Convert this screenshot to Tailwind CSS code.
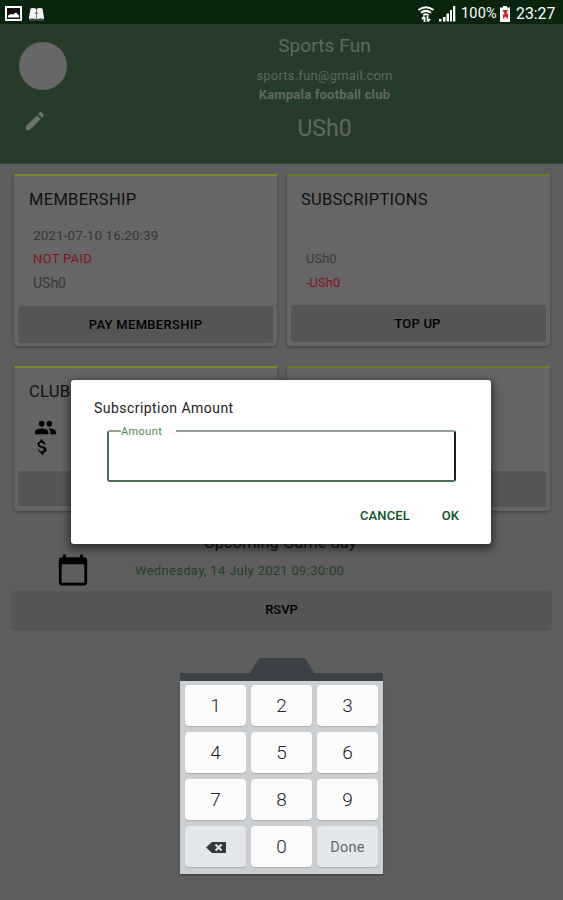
<!DOCTYPE html>
<html lang="en">
<head>
  <meta charset="UTF-8">
  <meta name="viewport" content="width=device-width, initial-scale=1.0">
  <title>Sports Fun</title>
  <script src="https://cdn.jsdelivr.net/npm/@tailwindcss/browser@4"></script>
</head>
<body class="bg-[#5e5e5e] font-[Roboto,sans-serif] text-black">
  <div class="relative w-[563px] h-[900px] overflow-hidden">

    <!-- Status bar -->
    <div class="h-6 bg-[#08240d] flex items-center text-white pl-[5px] pr-[7px] pt-[3px]">
      <svg class="w-[17px] h-[15px]" viewBox="0 0 17 15"><rect x="1" y="1" width="15" height="13" fill="#111" stroke="#fff" stroke-width="2"/><path d="M3 11.5V9.500l3-1.500 2 .5L11 6.500l3 3v2z" fill="#fff"/></svg>
      <svg class="w-[17px] h-[14px] ml-[6px]" viewBox="0 0 17 14"><path d="M2.500 1.500Q6 .5 8.500 2 11 .5 14.500 1.500L16.200 12Q11.500 10.800 8.500 12.500 5.500 10.800.8 12z" fill="#f4f4f4"/><path d="M8.500 2v10M6.500 6h4M1 13h6.500M9.500 13H16" stroke="#777" stroke-width="1"/></svg>
      <svg class="w-[18px] h-[18px] ml-auto" viewBox="0 0 18 18" fill="none" stroke="#fff" stroke-width="2"><path d="M1.500 5Q9-.5 16.500 5M4 7.800Q9 4 14 7.800M6.300 10.300Q9 8.200 11.700 10.300"/><path d="M7.500 17v-5M5 14l2.500-2.500M10.500 11v5.500M10.500 16.500L13 14" stroke-width="1.800"/></svg>
      <svg class="w-[17px] h-[16px] ml-[4px]" viewBox="0 0 17 16" fill="#fff"><path d="M0 13h2.500v2.500H0zM4 11h2.500v4.500H4zM7.500 7.500H10v8H7.500zM11 4h2v11.500h-2zM14 0h2.300v15.500H14z"/></svg>
      <span class="text-[14.5px] leading-5 ml-[5px] w-[37px] whitespace-nowrap tracking-[0.200px]">100%</span>
      <svg class="w-[10px] h-[16px] ml-[2px]" viewBox="0 0 10 16"><path d="M3 0h4v1.500h3V16H0V1.500h3z" fill="#fff"/><path d="M2.500 4h5.500L6.500 7 8 8v5L5.500 10.500 3 13V9l1.500-1.500z" fill="#d3202a"/></svg>
      <span class="text-[15.800px] leading-5 ml-[6px] w-[40px] whitespace-nowrap">23:27</span>
    </div>

    <!-- Profile header -->
    <header class="h-[140px] bg-[#273c28] border-b border-[#3c483c] flex text-[#5f695f]">
      <div class="w-[86px] pl-[19px] pt-[18px]">
        <div class="size-[48px] rounded-full bg-[#676767]"></div>
        <svg class="size-[24px] ml-[4px] mt-[19px]" viewBox="0 0 24 24" fill="#6c726c"><path d="M3 17.250V21h3.750L17.810 9.940l-3.750-3.750L3 17.250zM20.710 7.040a1 1 0 0 0 0-1.410l-2.340-2.340a1 1 0 0 0-1.410 0l-1.830 1.830 3.750 3.750 1.830-1.830z"/></svg>
      </div>
      <div class="flex-1 flex flex-col items-center text-center">
        <div class="text-[19px] leading-6 mt-[10px] tracking-[0.100px]">Sports Fun</div>
        <div class="text-[13px] leading-5 mt-[8px] tracking-[0.200px]">sports.fun@gmail.com</div>
        <div class="text-[13px] leading-5 -mt-px font-bold tracking-[0.200px]">Kampala football club</div>
        <div class="text-[23px] leading-7 mt-[10px]">USh0</div>
      </div>
    </header>

    <!-- Membership and subscriptions -->
    <div class="grid grid-cols-[263px_263px] gap-x-[10px] gap-y-[20px] px-[14px] mt-[10px]">
      <section class="h-[172px] bg-[#666] border-t-2 border-[#7b9011] rounded-b-sm shadow-[0_1px_3px_rgba(0,0,0,0.35)] flex flex-col">
        <h2 class="text-[16.500px] leading-6 pl-[15px] mt-[12px] tracking-[0.300px] text-[#111]">MEMBERSHIP</h2>
        <div class="pl-[19px] mt-[11px] text-[13.500px] leading-6 text-[#373737]">
          <p class="tracking-[0.100px]">2021-07-10 16:20:39</p>
          <p class="text-[#82141c] text-[13px] tracking-[0.300px]">NOT PAID</p>
          <p class="text-[14px]">USh0</p>
        </div>
        <button class="h-[37px] mx-[4px] mt-auto mb-[3px] rounded-[3px] bg-[#565656] text-[13px] font-medium tracking-[0.300px] pt-px">PAY MEMBERSHIP</button>
      </section>
      <section class="h-[172px] bg-[#666] border-t-2 border-[#5f8710] rounded-b-sm shadow-[0_1px_3px_rgba(0,0,0,0.35)] flex flex-col">
        <h2 class="text-[16.500px] leading-6 pl-[14px] mt-[12px] tracking-[0.250px] text-[#111]">SUBSCRIPTIONS</h2>
        <div class="pl-[19px] mt-[35px] text-[13px] leading-6 text-[#373737]">
          <p>USh0</p>
          <p class="text-[#82141c]">-USh0</p>
        </div>
        <button class="h-[37px] mx-[4px] mt-auto mb-[4px] rounded-[3px] bg-[#565656] text-[13px] font-medium tracking-[0.200px] pr-[2px]">TOP UP</button>
      </section>

      <section class="h-[145px] bg-[#646464] border-t-2 border-[#7b9011] rounded-b-sm shadow-[0_1px_3px_rgba(0,0,0,0.35)] flex flex-col">
        <h2 class="text-[16.500px] leading-6 pl-[15px] mt-[12px] tracking-[0.300px] text-[#111]">CLUB</h2>
        <svg class="size-[23px] ml-[20px] mt-[12px]" viewBox="0 0 24 24"><path d="M16 11c1.660 0 2.990-1.340 2.990-3S17.660 5 16 5s-3 1.340-3 3 1.340 3 3 3zm-8 0c1.660 0 2.990-1.340 2.990-3S9.660 5 8 5 5 6.340 5 8s1.340 3 3 3zm0 2c-2.330 0-7 1.170-7 3.500V19h14v-2.500c0-2.330-4.670-3.500-7-3.500zm8 0c-.29 0-.62.020-.97.050 1.160.84 1.970 1.970 1.970 3.450V19h6v-2.500c0-2.330-4.670-3.500-7-3.500z"/></svg>
        <svg class="size-[20px] ml-[18px] -mt-[2px]" viewBox="0 0 24 24"><path d="M11.800 10.900c-2.270-.59-3-1.200-3-2.150 0-1.090 1.010-1.850 2.700-1.850 1.780 0 2.440.85 2.500 2.100h2.210c-.07-1.720-1.120-3.300-3.210-3.810V3h-3v2.160c-1.940.42-3.500 1.680-3.500 3.610 0 2.310 1.910 3.460 4.700 4.130 2.500.6 3 1.480 3 2.410 0 .69-.49 1.790-2.700 1.790-2.060 0-2.870-.92-2.980-2.100H7.320c.12 2.190 1.760 3.420 3.680 3.830V21h3v-2.150c1.950-.37 3.500-1.500 3.500-3.550 0-2.840-2.430-3.810-5.700-4.400z"/></svg>
        <div class="h-[35px] mx-[4px] mt-auto mb-[5px] rounded-[3px] bg-[#565656]"></div>
      </section>
      <section class="h-[145px] bg-[#646464] border-t-2 border-[#717f12] rounded-b-sm shadow-[0_1px_3px_rgba(0,0,0,0.35)] flex flex-col">
        <div class="h-[36px] mx-[4px] mt-auto mb-[4px] rounded-[3px] bg-[#565656]"></div>
      </section>
    </div>

    <!-- Upcoming game -->
    <section class="mt-[20px] px-[12px] flex flex-col">
      <div class="h-[60px] flex">
        <svg class="size-[34px] ml-[44px] mt-[22px]" viewBox="0 0 24 24"><path d="M20 3h-1V1h-2v2H7V1H5v2H4c-1.100 0-2 .9-2 2v16c0 1.100.9 2 2 2h16c1.100 0 2-.9 2-2V5c0-1.100-.9-2-2-2zm0 18H4V8h16v13z"/></svg>
        <div class="ml-[45px]">
          <h3 class="text-[16.500px] leading-6 pl-[69px] text-[#111]">Upcoming Game day</h3>
          <p class="text-[13px] leading-5 mt-[6px] tracking-[0.310px] text-[#233f28]">Wednesday, 14 July 2021 09:30:00</p>
        </div>
      </div>
      <button class="h-[38px] rounded-[3px] bg-[#565656] shadow-[0_1px_2px_rgba(0,0,0,0.2)] text-[13px] font-medium">RSVP</button>
    </section>

    <!-- Number pad -->
    <div class="absolute left-[180px] top-[658px] w-[203px]">
      <svg class="block w-[203px] h-[23px]" viewBox="0 0 203 23"><path d="M0 15h70L78 1.500Q79 0 81 0h42q2 0 3 1.500L134 15h69v8H0z" fill="#3b4147"/></svg>
      <div class="bg-[#cccfd1] h-[193px] shadow-[0_1px_2px_rgba(0,0,0,0.4)] pt-[4px] px-[5px] grid grid-cols-3 auto-rows-[41px] gap-x-[5px] gap-y-[6px] text-[19px] font-light text-[#222]">
        <button class="bg-[#fcfcfd] rounded-[4px] shadow-[0_1px_1px_#a9adb0] pt-[2px]">1</button>
        <button class="bg-[#fcfcfd] rounded-[4px] shadow-[0_1px_1px_#a9adb0] pt-[2px]">2</button>
        <button class="bg-[#fcfcfd] rounded-[4px] shadow-[0_1px_1px_#a9adb0] pt-[2px]">3</button>
        <button class="bg-[#fcfcfd] rounded-[4px] shadow-[0_1px_1px_#a9adb0] pt-[2px]">4</button>
        <button class="bg-[#fcfcfd] rounded-[4px] shadow-[0_1px_1px_#a9adb0] pt-[2px]">5</button>
        <button class="bg-[#fcfcfd] rounded-[4px] shadow-[0_1px_1px_#a9adb0] pt-[2px]">6</button>
        <button class="bg-[#fcfcfd] rounded-[4px] shadow-[0_1px_1px_#a9adb0] pt-[2px]">7</button>
        <button class="bg-[#fcfcfd] rounded-[4px] shadow-[0_1px_1px_#a9adb0] pt-[2px]">8</button>
        <button class="bg-[#fcfcfd] rounded-[4px] shadow-[0_1px_1px_#a9adb0] pt-[2px]">9</button>
        <button class="bg-[#e4e7e9] rounded-[4px] shadow-[0_1px_1px_#a9adb0] flex items-center justify-center pt-[2px]">
          <svg class="w-[20px] h-[11px]" viewBox="0 0 20 11"><path d="M6 0h14v11H6L0 5.500z" fill="#35393c"/><path d="M9.500 2.500l6 6M15.500 2.500l-6 6" stroke="#e4e7e9" stroke-width="2"/></svg>
        </button>
        <button class="bg-[#fcfcfd] rounded-[4px] shadow-[0_1px_1px_#a9adb0] pt-[2px]">0</button>
        <button class="bg-[#e4e7e9] rounded-[4px] shadow-[0_1px_1px_#a9adb0] text-[14.500px] font-normal tracking-[0.200px] text-[#666] pt-[2px]">Done</button>
      </div>
    </div>

    <!-- Amount dialog -->
    <div class="absolute left-[71px] top-[380px] w-[420px] h-[164px] bg-white rounded-[3px] shadow-[0_3px_9px_2px_rgba(0,0,0,0.5)] flex flex-col">
      <h2 class="text-[14px] leading-5 pl-[23px] mt-[18px] tracking-[0.450px] text-[#222]">Subscription Amount</h2>
      <fieldset class="relative ml-[36px] mt-[12px] w-[349px] h-[52px] rounded-[3px] border-2 border-[#4d6b53] border-t-[#8ca293] border-r-[#12241a]">
        <div class="absolute left-[12px] -top-[8px] w-[55px] h-4 bg-white text-[11px] leading-4 tracking-[0.400px] text-[#4b8c50]">Amount</div>
      </fieldset>
      <div class="flex justify-end pr-[32px] mt-[24px] gap-[32px] text-[13px] leading-5 font-medium text-[#0b521a]">
        <button class="tracking-[0.100px]">CANCEL</button>
        <button>OK</button>
      </div>
    </div>
  </div>
</body>
</html>
